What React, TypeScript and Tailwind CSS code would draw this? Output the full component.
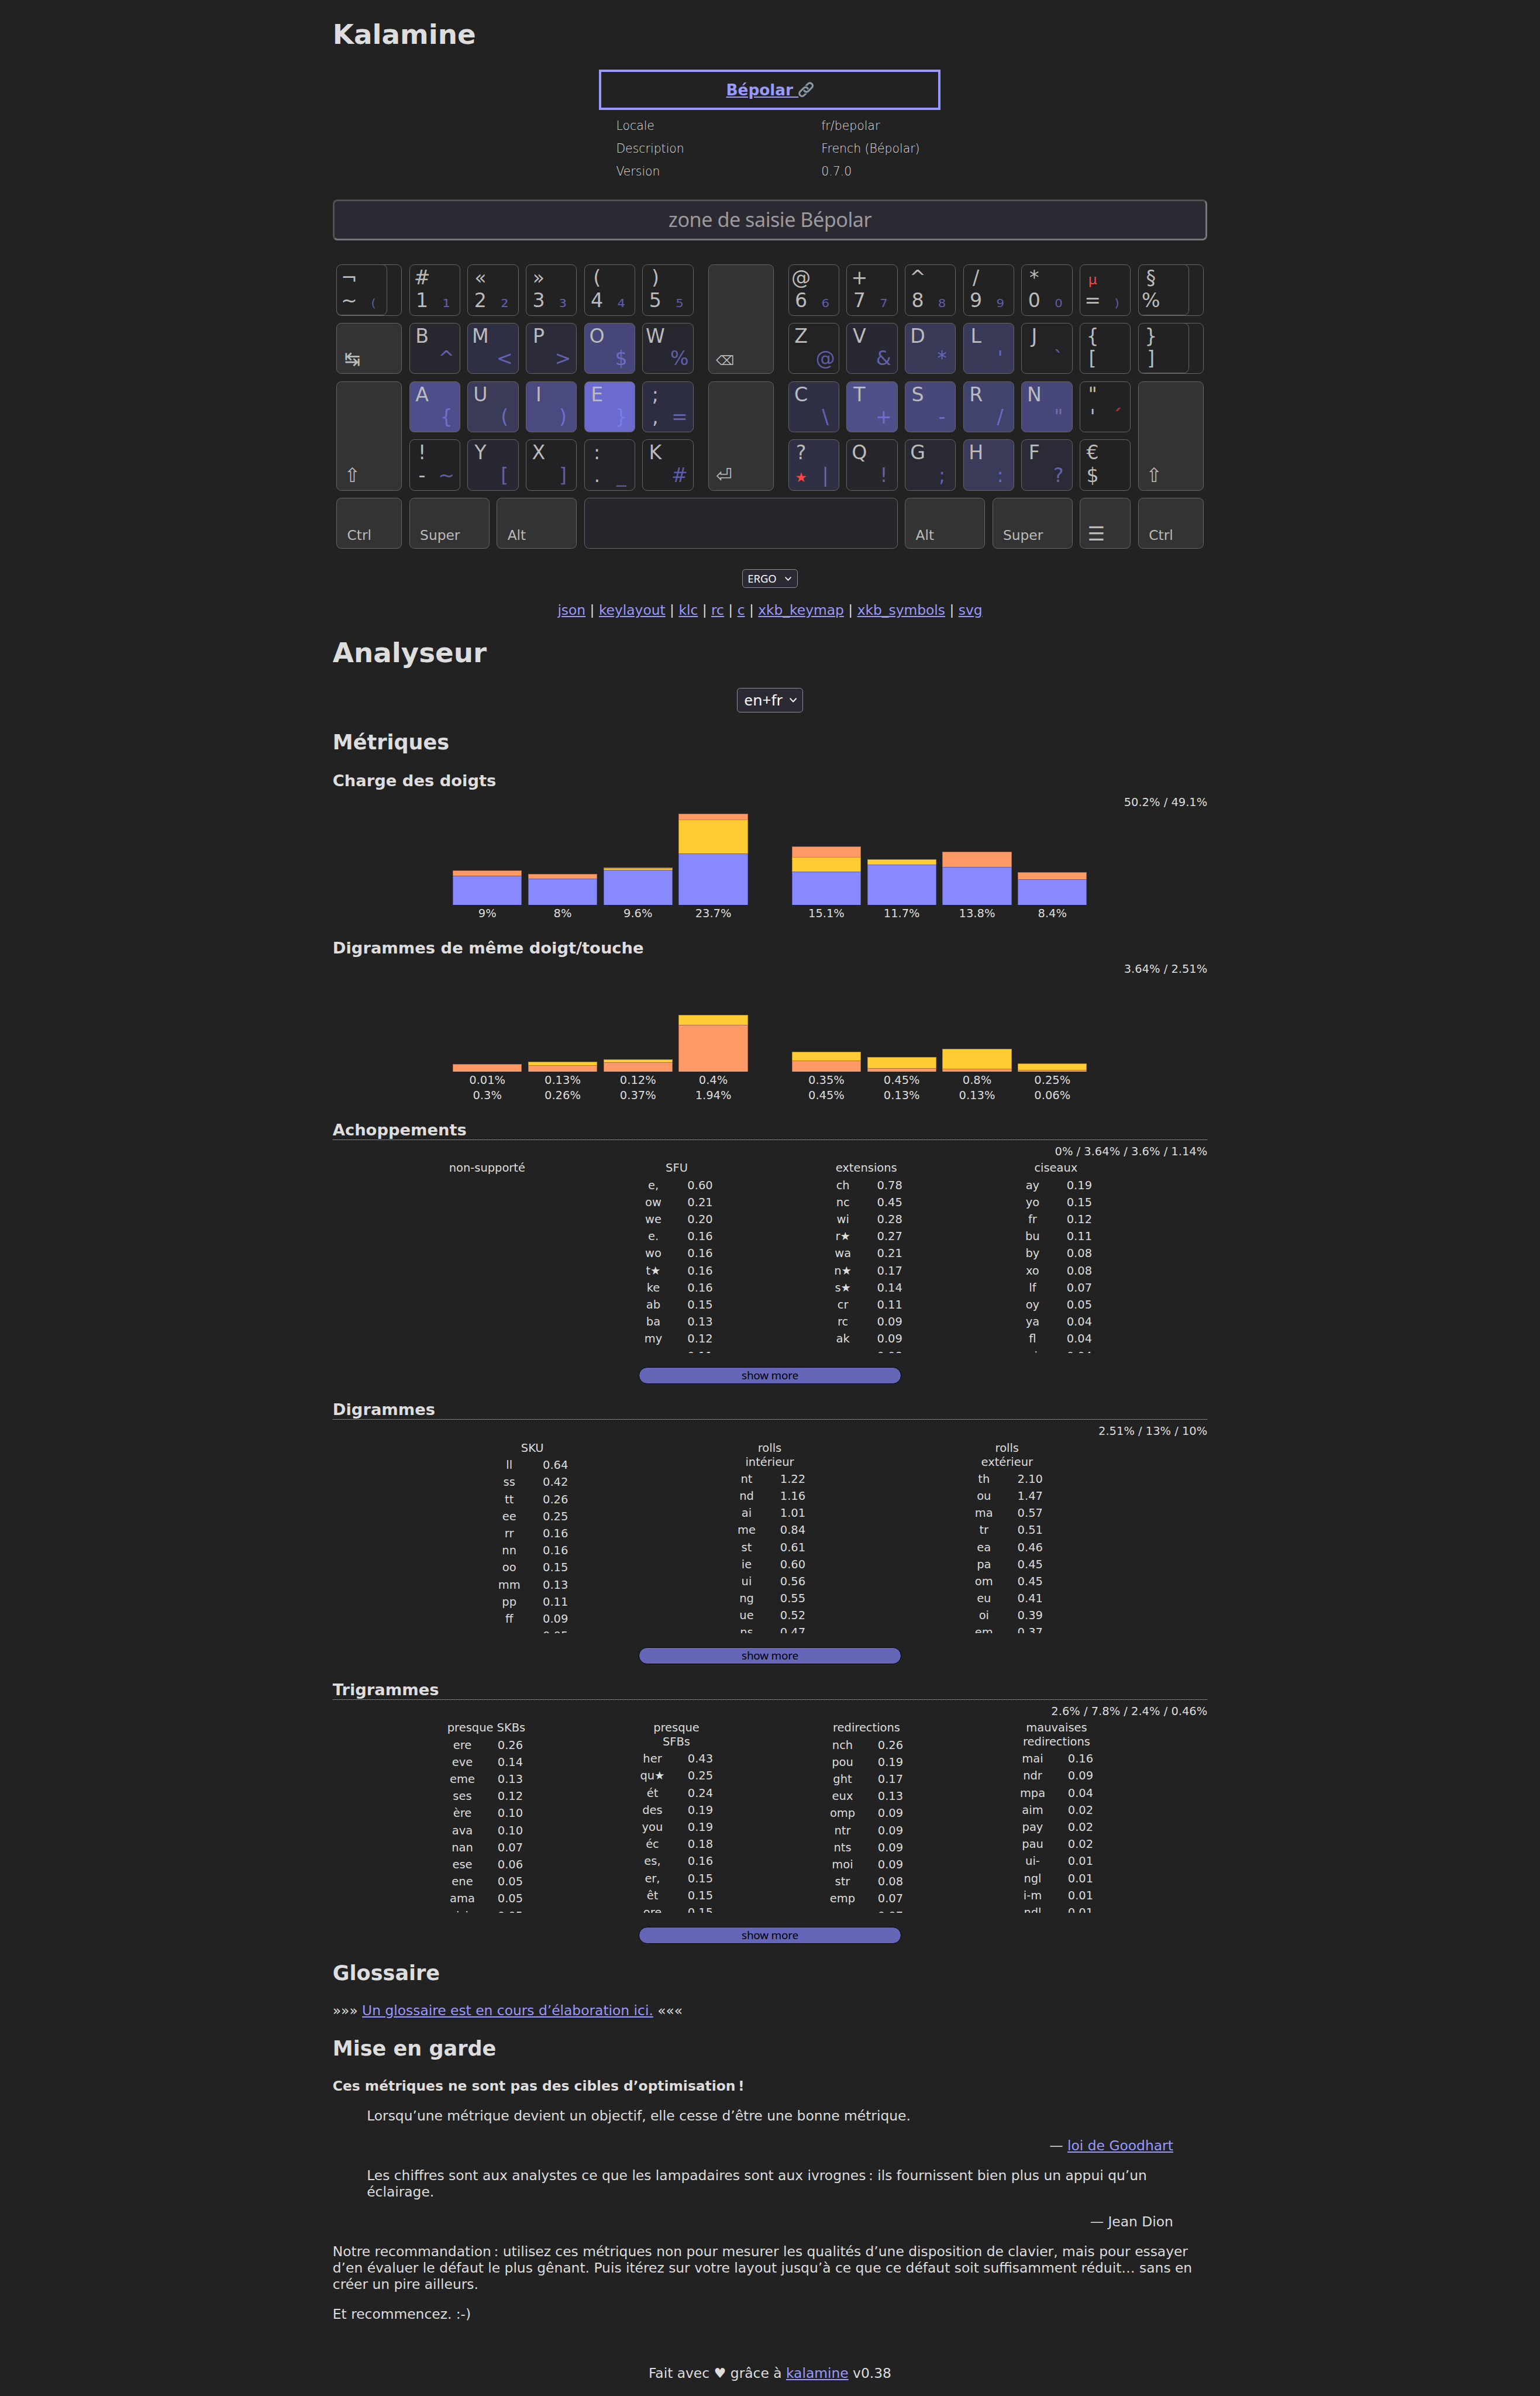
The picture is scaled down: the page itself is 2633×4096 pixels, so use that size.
import React from "react";

type KeyDef = {
  x: number;
  y: number;
  w?: number;
  h?: number;
  bg?: string;
  tl?: string;
  bl?: string;
  br?: string;
  ghost?: boolean;
  label?: string;
  icon?: string;
  red?: "tl" | "bl" | "br";
};

const SPECIAL = "#333333";

// Positions are expressed in eighths of a regular key width.
const keys: KeyDef[] = [
  { x: 0, y: 0, w: 10, tl: "¬", bl: "~", br: "₍", ghost: true },
  { x: 10, y: 0, tl: "#", bl: "1", br: "₁" },
  { x: 18, y: 0, tl: "«", bl: "2", br: "₂" },
  { x: 26, y: 0, tl: "»", bl: "3", br: "₃" },
  { x: 34, y: 0, tl: "(", bl: "4", br: "₄" },
  { x: 42, y: 0, tl: ")", bl: "5", br: "₅" },
  { x: 51, y: 0, w: 10, h: 2, bg: SPECIAL, icon: "⌫" },
  { x: 62, y: 0, tl: "@", bl: "6", br: "₆" },
  { x: 70, y: 0, tl: "+", bl: "7", br: "₇" },
  { x: 78, y: 0, tl: "^", bl: "8", br: "₈" },
  { x: 86, y: 0, tl: "/", bl: "9", br: "₉" },
  { x: 94, y: 0, tl: "*", bl: "0", br: "₀" },
  { x: 102, y: 0, tl: "µ", bl: "=", br: "₎", red: "tl" },
  { x: 110, y: 0, w: 10, tl: "§", bl: "%", ghost: true },

  { x: 0, y: 1, w: 10, bg: SPECIAL, icon: "↹" },
  { x: 10, y: 1, tl: "B", br: "^", bg: "#282831" },
  { x: 18, y: 1, tl: "M", br: "<", bg: "#2f2f44" },
  { x: 26, y: 1, tl: "P", br: ">", bg: "#2c2b39" },
  { x: 34, y: 1, tl: "O", br: "$", bg: "#464679" },
  { x: 42, y: 1, tl: "W", br: "%", bg: "#272730" },
  { x: 62, y: 1, tl: "Z", br: "@", bg: "#232325" },
  { x: 70, y: 1, tl: "V", br: "&", bg: "#282832" },
  { x: 78, y: 1, tl: "D", br: "*", bg: "#393958" },
  { x: 86, y: 1, tl: "L", br: "'", bg: "#393958" },
  { x: 94, y: 1, tl: "J", br: "`", bg: "#232326" },
  { x: 102, y: 1, tl: "{", bl: "[" },
  { x: 110, y: 1, w: 10, tl: "}", bl: "]", ghost: true },

  { x: 0, y: 2, w: 10, h: 2, bg: SPECIAL, icon: "⇧" },
  { x: 10, y: 2, tl: "A", br: "{", bg: "#4e4e8b" },
  { x: 18, y: 2, tl: "U", br: "(", bg: "#3a3a59" },
  { x: 26, y: 2, tl: "I", br: ")", bg: "#4a4a80" },
  { x: 34, y: 2, tl: "E", br: "}", bg: "#6b6bce" },
  { x: 42, y: 2, tl: ";", bl: ",", br: "=", bg: "#2d2d41" },
  { x: 51, y: 2, w: 10, h: 2, bg: SPECIAL, icon: "⏎" },
  { x: 62, y: 2, tl: "C", br: "\\", bg: "#303045" },
  { x: 70, y: 2, tl: "T", br: "+", bg: "#4f4f8a" },
  { x: 78, y: 2, tl: "S", br: "-", bg: "#474779" },
  { x: 86, y: 2, tl: "R", br: "/", bg: "#42426e" },
  { x: 94, y: 2, tl: "N", br: "\"", bg: "#47477a" },
  { x: 102, y: 2, tl: "\"", bl: "'", br: "´", red: "br" },
  { x: 110, y: 2, w: 10, h: 2, bg: SPECIAL, icon: "⇧" },

  { x: 10, y: 3, tl: "!", bl: "-", br: "~", bg: "#222224" },
  { x: 18, y: 3, tl: "Y", br: "[", bg: "#282832" },
  { x: 26, y: 3, tl: "X", br: "]", bg: "#222224" },
  { x: 34, y: 3, tl: ":", bl: ".", br: "_", bg: "#242428" },
  { x: 42, y: 3, tl: "K", br: "#", bg: "#222224" },
  { x: 62, y: 3, tl: "?", bl: "★", br: "|", bg: "#303045", red: "bl" },
  { x: 70, y: 3, tl: "Q", br: "!", bg: "#26262c" },
  { x: 78, y: 3, tl: "G", br: ";", bg: "#292933" },
  { x: 86, y: 3, tl: "H", br: ":", bg: "#3a3a59" },
  { x: 94, y: 3, tl: "F", br: "?", bg: "#2b2b37" },
  { x: 102, y: 3, tl: "€", bl: "$" },

  { x: 0, y: 4, w: 10, bg: SPECIAL, label: "Ctrl" },
  { x: 10, y: 4, w: 12, bg: SPECIAL, label: "Super" },
  { x: 22, y: 4, w: 12, bg: SPECIAL, label: "Alt" },
  { x: 34, y: 4, w: 44, bg: "#27262d" },
  { x: 78, y: 4, w: 12, bg: SPECIAL, label: "Alt" },
  { x: 90, y: 4, w: 12, bg: SPECIAL, label: "Super" },
  { x: 102, y: 4, w: 8, bg: SPECIAL, icon: "☰" },
  { x: 110, y: 4, w: 10, bg: SPECIAL, label: "Ctrl" },
];

function Legends({ k }: { k: KeyDef }) {
  const dead = "text-[23.3px] leading-none text-[#ff4444]";
  return (
    <div className="w-[86px] pt-[3px] text-[33.2px] leading-[37.9px]">
      <div className="h-[38.4px] whitespace-nowrap">
        <span className={`inline-block w-[42px] text-center ${k.red === "tl" ? dead : ""}`}>{k.tl ?? "\u00a0"}</span>
      </div>
      <div className="h-[37.9px] whitespace-nowrap">
        <span className={`inline-block w-[42px] text-center ${k.red === "bl" ? dead : ""}`}>{k.bl ?? "\u00a0"}</span>
        <span
          className={`inline-block w-[41px] text-center ${
            k.red === "br" ? "font-bold text-[#a03535]" : "text-[#8888ff]/60"
          }`}
        >
          {k.br ?? "\u00a0"}
        </span>
      </div>
    </div>
  );
}

function Key({ k }: { k: KeyDef }) {
  return (
    <div
      className="p-[6.2px]"
      style={{ gridColumn: `${k.x + 1} / span ${k.w ?? 8}`, gridRow: `${k.y + 1} / span ${k.h ?? 1}` }}
    >
      <div
        className="flex h-full w-full flex-col overflow-hidden rounded-[8.5px] border border-[#666666] text-[#bbbbbb]"
        style={{ backgroundColor: k.bg ?? "#222222" }}
      >
        {k.label && <div className="mt-auto pb-[10px] pl-[17.5px] text-[23.3px] leading-[24px]">{k.label}</div>}
        {k.icon && (
          <div
            className={`mt-auto pl-[12.5px] ${
              k.icon === "⌫" ? "pb-[6px] text-[22px] leading-[30px]" : "pb-[5.5px] text-[33.2px] leading-[38px]"
            }`}
          >
            {k.icon}
          </div>
        )}
        {(k.tl || k.bl) &&
          (k.ghost ? (
            <div className="-ml-px -mt-px h-[87px] w-[87px] rounded-[8.5px] border border-[#666666]">
              <Legends k={k} />
            </div>
          ) : (
            <Legends k={k} />
          ))}
      </div>
    </div>
  );
}

const BLUE = "#8888ff";
const YELLOW = "#ffcc33";
const ORANGE = "#ff9966";

type Bar = { parts: [string, number][]; labels: string[] };

const load: Bar[] = [
  { parts: [[ORANGE, 8.8], [BLUE, 49.9]], labels: ["9%"] },
  { parts: [[ORANGE, 8.1], [BLUE, 44.4]], labels: ["8%"] },
  { parts: [[ORANGE, 0.6], [YELLOW, 2.6], [BLUE, 59.5]], labels: ["9.6%"] },
  { parts: [[ORANGE, 10.5], [YELLOW, 57.4], [BLUE, 88]], labels: ["23.7%"] },
  { parts: [[ORANGE, 17.9], [YELLOW, 25], [BLUE, 56.5]], labels: ["15.1%"] },
  { parts: [[YELLOW, 9.2], [BLUE, 68.3]], labels: ["11.7%"] },
  { parts: [[ORANGE, 26], [BLUE, 65]], labels: ["13.8%"] },
  { parts: [[ORANGE, 12.5], [BLUE, 43.1]], labels: ["8.4%"] },
];

const sameFinger: Bar[] = [
  { parts: [[ORANGE, 13.2]], labels: ["0.01%", "0.3%"] },
  { parts: [[YELLOW, 6.5], [ORANGE, 10.6]], labels: ["0.13%", "0.26%"] },
  { parts: [[YELLOW, 4.9], [ORANGE, 15.8]], labels: ["0.12%", "0.37%"] },
  { parts: [[YELLOW, 16.6], [ORANGE, 79.7]], labels: ["0.4%", "1.94%"] },
  { parts: [[YELLOW, 14.4], [ORANGE, 18.9]], labels: ["0.35%", "0.45%"] },
  { parts: [[YELLOW, 19], [ORANGE, 5.3]], labels: ["0.45%", "0.13%"] },
  { parts: [[YELLOW, 33.7], [ORANGE, 4.9]], labels: ["0.8%", "0.13%"] },
  { parts: [[YELLOW, 10.8], [ORANGE, 2.5]], labels: ["0.25%", "0.06%"] },
];

function Chart({ bars }: { bars: Bar[] }) {
  return (
    <div className="ml-[205.3px] flex gap-[10.6px] text-[19.47px] leading-[26.3px]">
      {bars.map((b, i) => (
        <div key={i} className={`w-[118.2px] ${i === 4 ? "ml-[64.6px]" : ""}`}>
          <div className="flex h-[163.2px] flex-col justify-end">
            {b.parts.map(([color, height], j) => (
              <div
                key={j}
                className="shrink-0 border-x border-t border-black/30"
                style={{ height, backgroundColor: color }}
              />
            ))}
          </div>
          <div className="pt-[2px] text-center">
            {b.labels.map((l) => (
              <div key={l}>{l}</div>
            ))}
          </div>
        </div>
      ))}
    </div>
  );
}

type Column = { title: string[]; rows: string };

const stumbles: Column[] = [
  { title: ["non-supporté"], rows: "" },
  { title: ["SFU"], rows: "e, 0.60|ow 0.21|we 0.20|e. 0.16|wo 0.16|t★ 0.16|ke 0.16|ab 0.15|ba 0.13|my 0.12|eo 0.11" },
  { title: ["extensions"], rows: "ch 0.78|nc 0.45|wi 0.28|r★ 0.27|wa 0.21|n★ 0.17|s★ 0.14|cr 0.11|rc 0.09|ak 0.09|sc 0.08" },
  { title: ["ciseaux"], rows: "ay 0.19|yo 0.15|fr 0.12|bu 0.11|by 0.08|xo 0.08|lf 0.07|oy 0.05|ya 0.04|fl 0.04|xi 0.04" },
];

const digrams: Column[] = [
  { title: ["SKU"], rows: "ll 0.64|ss 0.42|tt 0.26|ee 0.25|rr 0.16|nn 0.16|oo 0.15|mm 0.13|pp 0.11|ff 0.09|cc 0.05" },
  { title: ["rolls", "intérieur"], rows: "nt 1.22|nd 1.16|ai 1.01|me 0.84|st 0.61|ie 0.60|ui 0.56|ng 0.55|ue 0.52|ns 0.47" },
  { title: ["rolls", "extérieur"], rows: "th 2.10|ou 1.47|ma 0.57|tr 0.51|ea 0.46|pa 0.45|om 0.45|eu 0.41|oi 0.39|em 0.37" },
];

const trigrams: Column[] = [
  { title: ["presque SKBs"], rows: "ere 0.26|eve 0.14|eme 0.13|ses 0.12|ère 0.10|ava 0.10|nan 0.07|ese 0.06|ene 0.05|ama 0.05|isi 0.05" },
  { title: ["presque", "SFBs"], rows: "her 0.43|qu★ 0.25|ét 0.24|des 0.19|you 0.19|éc 0.18|es, 0.16|er, 0.15|êt 0.15|ore 0.15" },
  { title: ["redirections"], rows: "nch 0.26|pou 0.19|ght 0.17|eux 0.13|omp 0.09|ntr 0.09|nts 0.09|moi 0.09|str 0.08|emp 0.07|nce 0.07" },
  { title: ["mauvaises", "redirections"], rows: "mai 0.16|ndr 0.09|mpa 0.04|aim 0.02|pay 0.02|pau 0.02|ui- 0.01|ngl 0.01|i-m 0.01|ndl 0.01" },
];

function Stats({ children, className }: { children: React.ReactNode; className: string }) {
  return <div className={`text-right text-[19.47px] leading-[23.4px] ${className}`}>{children}</div>;
}

function NgramSection({
  title,
  stats,
  columns,
  column,
  cell,
  className,
}: {
  title: string;
  stats: string;
  columns: Column[];
  column: string;
  cell: string;
  className: string;
}) {
  return (
    <section className={className}>
      <h3 className="border-b border-dotted border-[#dddddd] text-[27.34px] font-bold leading-[32px]">{title}</h3>
      <Stats className="mt-[8px]">{stats}</Stats>
      <div className="flex h-[333px] justify-center overflow-hidden pt-[5.5px] text-[19.47px]">
        {columns.map((c, i) => (
          <div key={i} className={`shrink-0 text-center ${column}`}>
            <div className="mb-[2.8px] leading-[23.5px]">
              {c.title.map((t) => (
                <div key={t}>{t}</div>
              ))}
            </div>
            {c.rows &&
              c.rows.split("|").map((row) => {
                const [name, value] = row.split(" ");
                return (
                  <div key={name} className="flex justify-center leading-[29.19px]">
                    <span className={cell}>{name}</span>
                    <span className={cell}>{value}</span>
                  </div>
                );
              })}
          </div>
        ))}
      </div>
      <button className="mx-auto mt-[24px] block h-[29px] w-[448.6px] rounded-[14.6px] border-[1.5px] border-black bg-[#6666b8] text-[18.9px] leading-[26px] tracking-[-0.2px] text-black font-['Noto_Sans',sans-serif]">
        show more
      </button>
    </section>
  );
}

function Link({ children }: { children: React.ReactNode }) {
  return <a className="text-[#9999ff] underline">{children}</a>;
}

function Chevron({ className }: { className: string }) {
  return (
    <svg viewBox="0 0 12 8" className={className} fill="none" stroke="#fbfbfe" strokeWidth="1.9" strokeLinecap="round" strokeLinejoin="round">
      <path d="M1.2 1.2 6 6.4 10.8 1.2" />
    </svg>
  );
}

const formats = ["json", "keylayout", "klc", "rc", "c", "xkb_keymap", "xkb_symbols", "svg"];

export default function App() {
  return (
    <div className="flex h-[4096px] w-full justify-center overflow-hidden bg-[#222222] text-[23.37px] leading-[27.75px] text-[#dddddd] font-['DejaVu_Sans',sans-serif]">
      <main className="flex w-[1495.4px] flex-col">
        <h1 className="mt-[32px] text-[46.73px] font-bold leading-[54px]">Kalamine</h1>

        <div className="mx-auto mt-[33px] flex h-[69.4px] w-[584px] items-center justify-center border-4 border-[#9999ff] pt-[1.5px] text-[26.3px] font-bold text-[#9999ff]">
          <a className="whitespace-nowrap underline">
            Bépolar{" "}
            <svg viewBox="0 0 36 36" className="inline h-[26.3px] w-[26.3px] align-[-3px]" fill="#8899a6">
              <path d="M15 9l6-6s6-6 12 0 0 12 0 12l-8 8s-6 6-12 0c-1.125-1.125-1.822-2.62-1.822-2.62l3.353-3.348S14.396 18.396 16 20c0 0 3 3 6 0l8-8s3-3 0-6-6 0-6 0l-3.729 3.729s-1.854-1.521-5.646-.354L15 9z" />
              <path d="M20.845 27l-6 6s-6 6-12 0 0-12 0-12l8-8s6-6 12 0c1.125 1.125 1.822 2.62 1.822 2.62l-3.354 3.349s.135-1.365-1.469-2.969c0 0-3-3-6 0l-8 8s-3 3 0 6 6 0 6 0l3.729-3.729s1.854 1.521 5.646.354l-.374.375z" />
            </svg>
          </a>
        </div>
        <dl className="mx-auto mt-[7.8px] grid w-[584px] grid-cols-[350.8px_1fr] pl-[28.9px] text-[20.45px] font-extralight leading-[38.7px]">
          <dt>Locale</dt>
          <dd>fr/bepolar</dd>
          <dt>Description</dt>
          <dd>French (Bépolar)</dd>
          <dt>Version</dt>
          <dd>0.7.0</dd>
        </dl>

        <div className="mt-[28.6px] flex h-[70.2px] items-center justify-center rounded-[8px] border-[3px] border-b-[#77767b] border-l-[#505053] border-r-[#77767b] border-t-[#505053] bg-[#2b2a33] pb-[3px] text-[34.2px] tracking-[-0.5px] text-[#9b9a9f] font-['Noto_Sans',sans-serif]">
          zone de saisie Bépolar
        </div>

        <div className="mt-[35px] grid h-[498.5px] grid-cols-[repeat(120,minmax(0,1fr))] grid-rows-[repeat(5,99.7px)]">
          {keys.map((k) => (
            <Key key={`${k.x}-${k.y}`} k={k} />
          ))}
        </div>

        <div className="mx-auto mt-[28.9px] flex h-[31.7px] w-[94.4px] items-center justify-between rounded-[5.5px] border-[1.5px] border-[#8f8f9d] bg-[#2b2a33] pl-[8px] pr-[10px] text-[18.4px] leading-[22px] text-[#fbfbfe] font-['Noto_Sans',sans-serif]">
          ERGO
          <Chevron className="h-[7.5px] w-[11px]" />
        </div>

        <p className="mt-[24.6px] text-center">
          {formats.map((f, i) => (
            <React.Fragment key={f}>
              {i > 0 && " | "}
              <Link>{f}</Link>
            </React.Fragment>
          ))}
        </p>

        <h1 className="mt-[31.4px] text-[46.73px] font-bold leading-[54px]">Analyseur</h1>
        <div className="mx-auto mt-[32.7px] flex h-[42.1px] w-[112.4px] items-center justify-between rounded-[5.5px] border-[1.5px] border-[#8f8f9d] bg-[#2b2a33] pl-[11px] pr-[9px] text-[26.3px] text-[#fbfbfe] font-['Noto_Sans',sans-serif]">
          en+fr
          <Chevron className="h-[8.2px] w-[12.3px]" />
        </div>

        <h2 className="mt-[29.9px] text-[35.05px] font-bold leading-[41px]">Métriques</h2>
        <h3 className="mt-[30.6px] text-[27.34px] font-bold leading-[32px]">Charge des doigts</h3>
        <Stats className="mt-[8.8px]">50.2% / 49.1%</Stats>
        <Chart bars={load} />

        <h3 className="mt-[29.7px] text-[27.34px] font-bold leading-[32px]">Digrammes de même doigt/touche</h3>
        <Stats className="mt-[8.6px]">3.64% / 2.51%</Stats>
        <Chart bars={sameFinger} />

        <NgramSection
          className="mt-[29.2px]"
          title="Achoppements"
          stats="0% / 3.64% / 3.6% / 1.14%"
          columns={stumbles}
          column="w-[324.2px] translate-x-[2.6px]"
          cell="w-[80px]"
        />
        <NgramSection
          className="mt-[28.2px]"
          title="Digrammes"
          stats="2.51% / 13% / 10%"
          columns={digrams}
          column="w-[405.8px] -translate-x-[0.5px]"
          cell="w-[79px]"
        />
        <NgramSection
          className="mt-[28px]"
          title="Trigrammes"
          stats="2.6% / 7.8% / 2.4% / 0.46%"
          columns={trigrams}
          column="w-[325px] translate-x-[2.5px]"
          cell="w-[82px]"
        />

        <h2 className="mt-[29.3px] text-[35.05px] font-bold leading-[41px]">Glossaire</h2>
        <p className="mt-[30.9px]">
          »»» <Link>Un glossaire est en cours d’élaboration ici.</Link> «««
        </p>
        <h2 className="mt-[28.7px] text-[35.05px] font-bold leading-[41px]">Mise en garde</h2>
        <p className="mt-[31.1px] font-bold">Ces métriques ne sont pas des cibles d’optimisation{"\u202f"}!</p>
        <blockquote className="mx-[58.4px] mt-[23.4px] flex flex-col gap-[23.4px]">
          <p>Lorsqu’une métrique devient un objectif, elle cesse d’être une bonne métrique.</p>
          <p className="text-right">
            — <Link>loi de Goodhart</Link>
          </p>
          <p>
            Les chiffres sont aux analystes ce que les lampadaires sont aux ivrognes{"\u202f"}: ils fournissent bien plus
            un appui qu’un éclairage.
          </p>
          <p className="text-right">— Jean Dion</p>
        </blockquote>
        <p className="mt-[23.4px]">
          Notre recommandation{"\u202f"}: utilisez ces métriques non pour mesurer les qualités d’une disposition de
          clavier, mais pour essayer d’en évaluer le défaut le plus gênant. Puis itérez sur votre layout jusqu’à ce que
          ce défaut soit suffisamment réduit… sans en créer un pire ailleurs.
        </p>
        <p className="mt-[23.4px]">Et recommencez. :-)</p>
        <footer className="mt-[73.9px] text-center">
          Fait avec ♥ grâce à <Link>kalamine</Link> v0.38
        </footer>
      </main>
    </div>
  );
}
